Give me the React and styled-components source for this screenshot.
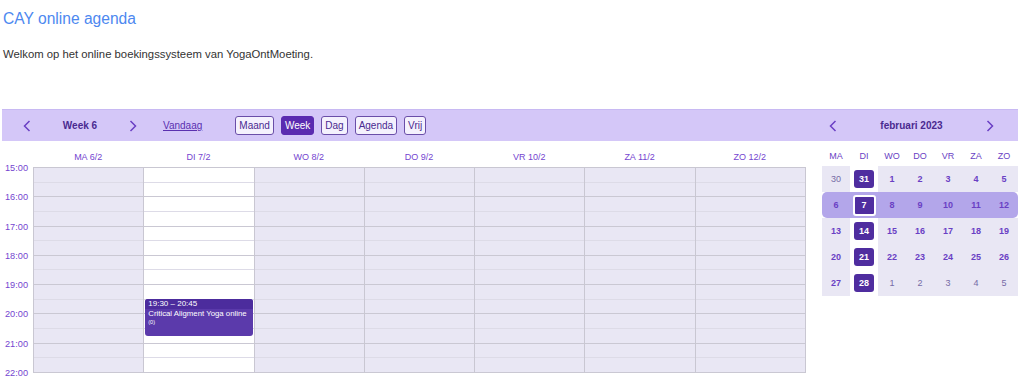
import React from "react";
import styled, { createGlobalStyle } from "styled-components";

const Global = createGlobalStyle`
  html, body { margin: 0; padding: 0; background: #fff; }
  body { font-family: "Liberation Sans", Arial, sans-serif; overflow: hidden; }
  * { box-sizing: border-box; }
`;

const Page = styled.div`
  width: 1024px;
  height: 384px;
  padding: 0 6px 0 2px;
  overflow: hidden;
`;

const Title = styled.h1`
  margin: 10px 0 0 1px;
  font-size: 15.6px;
  line-height: 18px;
  font-weight: normal;
  color: #4d88f0;
`;

const Intro = styled.p`
  margin: 20px 0 0 1px;
  font-size: 11.3px;
  line-height: 13px;
  color: #333;
`;

const Calendar = styled.div`
  margin-top: 48px;
  width: 1016px;
`;

const Toolbar = styled.div`
  height: 32px;
  background: #d4c7f8;
  border-top: 1px solid #c8b9f3;
  display: flex;
  align-items: center;
`;

const MainBar = styled.div`
  width: 804px;
  display: flex;
  align-items: center;
  padding-left: 21px;
`;

const SideBar = styled.div`
  margin-left: 16px;
  width: 196px;
  display: flex;
  align-items: center;
  justify-content: space-between;
  padding: 0 24px 0 7px;
`;

const Nav = styled.div`
  width: 114px;
  display: flex;
  align-items: center;
  justify-content: space-between;
`;

const NavTitle = styled.span`
  font-size: 10px;
  font-weight: bold;
  color: #4a2a90;
`;

const ArrowBtn = styled.span`
  display: flex;
  width: 8px;
  height: 12px;
  color: #6a3fc4;
`;

const Today = styled.span`
  margin-left: 26px;
  font-size: 10px;
  color: #5a30b0;
  text-decoration: underline;
`;

const Views = styled.div`
  margin-left: 33px;
  display: flex;
  gap: 7px;
`;

const ViewBtn = styled.span`
  height: 19px;
  padding: 0 3px;
  display: flex;
  align-items: center;
  border: 1px solid ${(p) => (p.$active ? "#5a2bb0" : "#6a4ea8")};
  border-radius: 3px;
  background: ${(p) => (p.$active ? "#5a2bb0" : "#f4f1fd")};
  color: ${(p) => (p.$active ? "#fff" : "#4a2a90")};
  font-size: 10px;
`;

const Body = styled.div`
  display: flex;
  align-items: flex-start;
`;

const WeekView = styled.div`
  width: 804px;
`;

const HeadRow = styled.div`
  height: 26px;
  display: grid;
  grid-template-columns: 31px repeat(7, 1fr);
  padding-right: 1px;
`;

const HeadCell = styled.div`
  padding-top: 11px;
  text-align: center;
  font-size: 9px;
  line-height: 11px;
  color: #7445d0;
`;

const GridRow = styled.div`
  display: flex;
`;

const Gutter = styled.div`
  width: 31px;
  margin-top: -7px;
  display: flex;
  flex-direction: column;
`;

const TimeLabel = styled.div`
  height: 29.29px;
  flex: none;
  padding-left: 3px;
  font-size: 9.2px;
  line-height: 16px;
  color: #7445d0;
`;

const Grid = styled.div`
  flex: 1;
  height: 206px;
  display: grid;
  grid-template-columns: repeat(7, 1fr);
  border-left: 1px solid #c9c7d2;
  border-top: 1px solid #c9c7d2;
`;

const DayCol = styled.div`
  position: relative;
  display: flex;
  flex-direction: column;
  background: ${(p) => (p.$today ? "#fff" : "#e9e7f4")};
  border-right: 1px solid #c9c7d2;
`;

const Slot = styled.div`
  flex: 1;
  border-bottom: 1px solid ${(p) => (p.$hour ? "#cac8d3" : "#dddbe7")};
`;

const Event = styled.div`
  position: absolute;
  left: 1px;
  right: 1px;
  border-radius: 3px;
  background: #5b3aab;
  color: #fff;
  overflow: hidden;
`;

const EventTime = styled.div`
  background: #4c2c9d;
  padding: 0 3px;
  font-size: 8px;
  line-height: 10px;
  height: 10px;
`;

const EventTitle = styled.div`
  padding: 0 3px;
  font-size: 7.8px;
  line-height: 10px;
`;

const EventCount = styled.div`
  padding: 0 3px;
  font-size: 5.5px;
  line-height: 7px;
`;

const Mini = styled.div`
  margin-left: 16px;
  width: 196px;
`;

const MiniHead = styled.div`
  height: 25px;
  display: grid;
  grid-template-columns: repeat(7, 28px);
`;

const MiniHeadCell = styled.div`
  padding-top: 10px;
  text-align: center;
  font-size: 9px;
  line-height: 11px;
  color: #6a3fc4;
`;

const MiniRow = styled.div`
  height: 26px;
  display: grid;
  grid-template-columns: repeat(7, 28px);
  border-radius: ${(p) => (p.$sel ? "5px" : "0")};
  background: ${(p) => (p.$sel ? "#b3a6ea" : "transparent")};
`;

const MiniCell = styled.div`
  display: flex;
  align-items: center;
  justify-content: center;
  background: ${(p) => (p.$sel ? "transparent" : p.$tue ? "#fff" : "#e9e7f4")};
  font-size: 9px;
  font-weight: ${(p) => (p.$out ? "normal" : "bold")};
  color: ${(p) => (p.$out ? "#766ba6" : "#6a3fc4")};
`;

const DayBox = styled.span`
  min-width: ${(p) => (p.$cur ? "23px" : "20px")};
  height: ${(p) => (p.$cur ? "21px" : "18px")};
  display: flex;
  align-items: center;
  justify-content: center;
  border-radius: 3px;
  background: #4f2d9f;
  color: #fff;
  border: ${(p) => (p.$cur ? "2px solid #fff" : "none")};
`;

const Footer = styled.div`
  margin-top: 2px;
  margin-left: -2px;
  width: 1024px;
  height: 20px;
  background: linear-gradient(to right, #f1f1f1, #f4f4f4 70%, #fafafa);
`;

const Chevron = ({ dir }) => (
  <svg width="8" height="12" viewBox="0 0 8 12">
    <polyline
      points={dir === "l" ? "6.5,1 1.5,6 6.5,11" : "1.5,1 6.5,6 1.5,11"}
      fill="none"
      stroke="currentColor"
      strokeWidth="1.5"
    />
  </svg>
);

const days = ["MA 6/2", "DI 7/2", "WO 8/2", "DO 9/2", "VR 10/2", "ZA 11/2", "ZO 12/2"];
const hours = ["15:00", "16:00", "17:00", "18:00", "19:00", "20:00", "21:00", "22:00"];
const wd = ["MA", "DI", "WO", "DO", "VR", "ZA", "ZO"];
const weeks = [
  [[30, true], [31], [1], [2], [3], [4], [5]],
  [[6], [7], [8], [9], [10], [11], [12]],
  [[13], [14], [15], [16], [17], [18], [19]],
  [[20], [21], [22], [23], [24], [25], [26]],
  [[27], [28], [1, true], [2, true], [3, true], [4, true], [5, true]],
];

const SLOT = 205 / 14;

export default function App() {
  return (
    <Page>
      <Global />
      <Title>CAY online agenda</Title>
      <Intro>Welkom op het online boekingssysteem van YogaOntMoeting.</Intro>
      <Calendar>
        <Toolbar>
          <MainBar>
            <Nav>
              <ArrowBtn><Chevron dir="l" /></ArrowBtn>
              <NavTitle>Week 6</NavTitle>
              <ArrowBtn><Chevron dir="r" /></ArrowBtn>
            </Nav>
            <Today>Vandaag</Today>
            <Views>
              <ViewBtn>Maand</ViewBtn>
              <ViewBtn $active>Week</ViewBtn>
              <ViewBtn>Dag</ViewBtn>
              <ViewBtn>Agenda</ViewBtn>
              <ViewBtn>Vrij</ViewBtn>
            </Views>
          </MainBar>
          <SideBar>
            <ArrowBtn><Chevron dir="l" /></ArrowBtn>
            <NavTitle>februari 2023</NavTitle>
            <ArrowBtn><Chevron dir="r" /></ArrowBtn>
          </SideBar>
        </Toolbar>
        <Body>
          <WeekView>
            <HeadRow>
              <div />
              {days.map((d) => (
                <HeadCell key={d}>{d}</HeadCell>
              ))}
            </HeadRow>
            <GridRow>
              <Gutter>
                {hours.map((h) => (
                  <TimeLabel key={h}>{h}</TimeLabel>
                ))}
              </Gutter>
              <Grid>
                {days.map((d, i) => (
                  <DayCol key={d} $today={i === 1}>
                    {Array.from({ length: 14 }).map((_, s) => (
                      <Slot key={s} $hour={s % 2 === 1} />
                    ))}
                    {i === 1 && (
                      <Event style={{ top: `${9 * SLOT - 1}px`, height: `${2.5 * SLOT + 1}px` }}>
                        <EventTime>19:30 – 20:45</EventTime>
                        <EventTitle>Critical Aligment Yoga online</EventTitle>
                        <EventCount>(0)</EventCount>
                      </Event>
                    )}
                  </DayCol>
                ))}
              </Grid>
            </GridRow>
          </WeekView>
          <Mini>
            <MiniHead>
              {wd.map((w) => (
                <MiniHeadCell key={w}>{w}</MiniHeadCell>
              ))}
            </MiniHead>
            {weeks.map((wk, r) => (
              <MiniRow key={r} $sel={r === 1}>
                {wk.map(([n, out], c) => (
                  <MiniCell key={c} $sel={r === 1} $tue={c === 1} $out={out}>
                    {c === 1 ? <DayBox $cur={r === 1}>{n}</DayBox> : n}
                  </MiniCell>
                ))}
              </MiniRow>
            ))}
          </Mini>
        </Body>
      </Calendar>
      <Footer />
    </Page>
  );
}
